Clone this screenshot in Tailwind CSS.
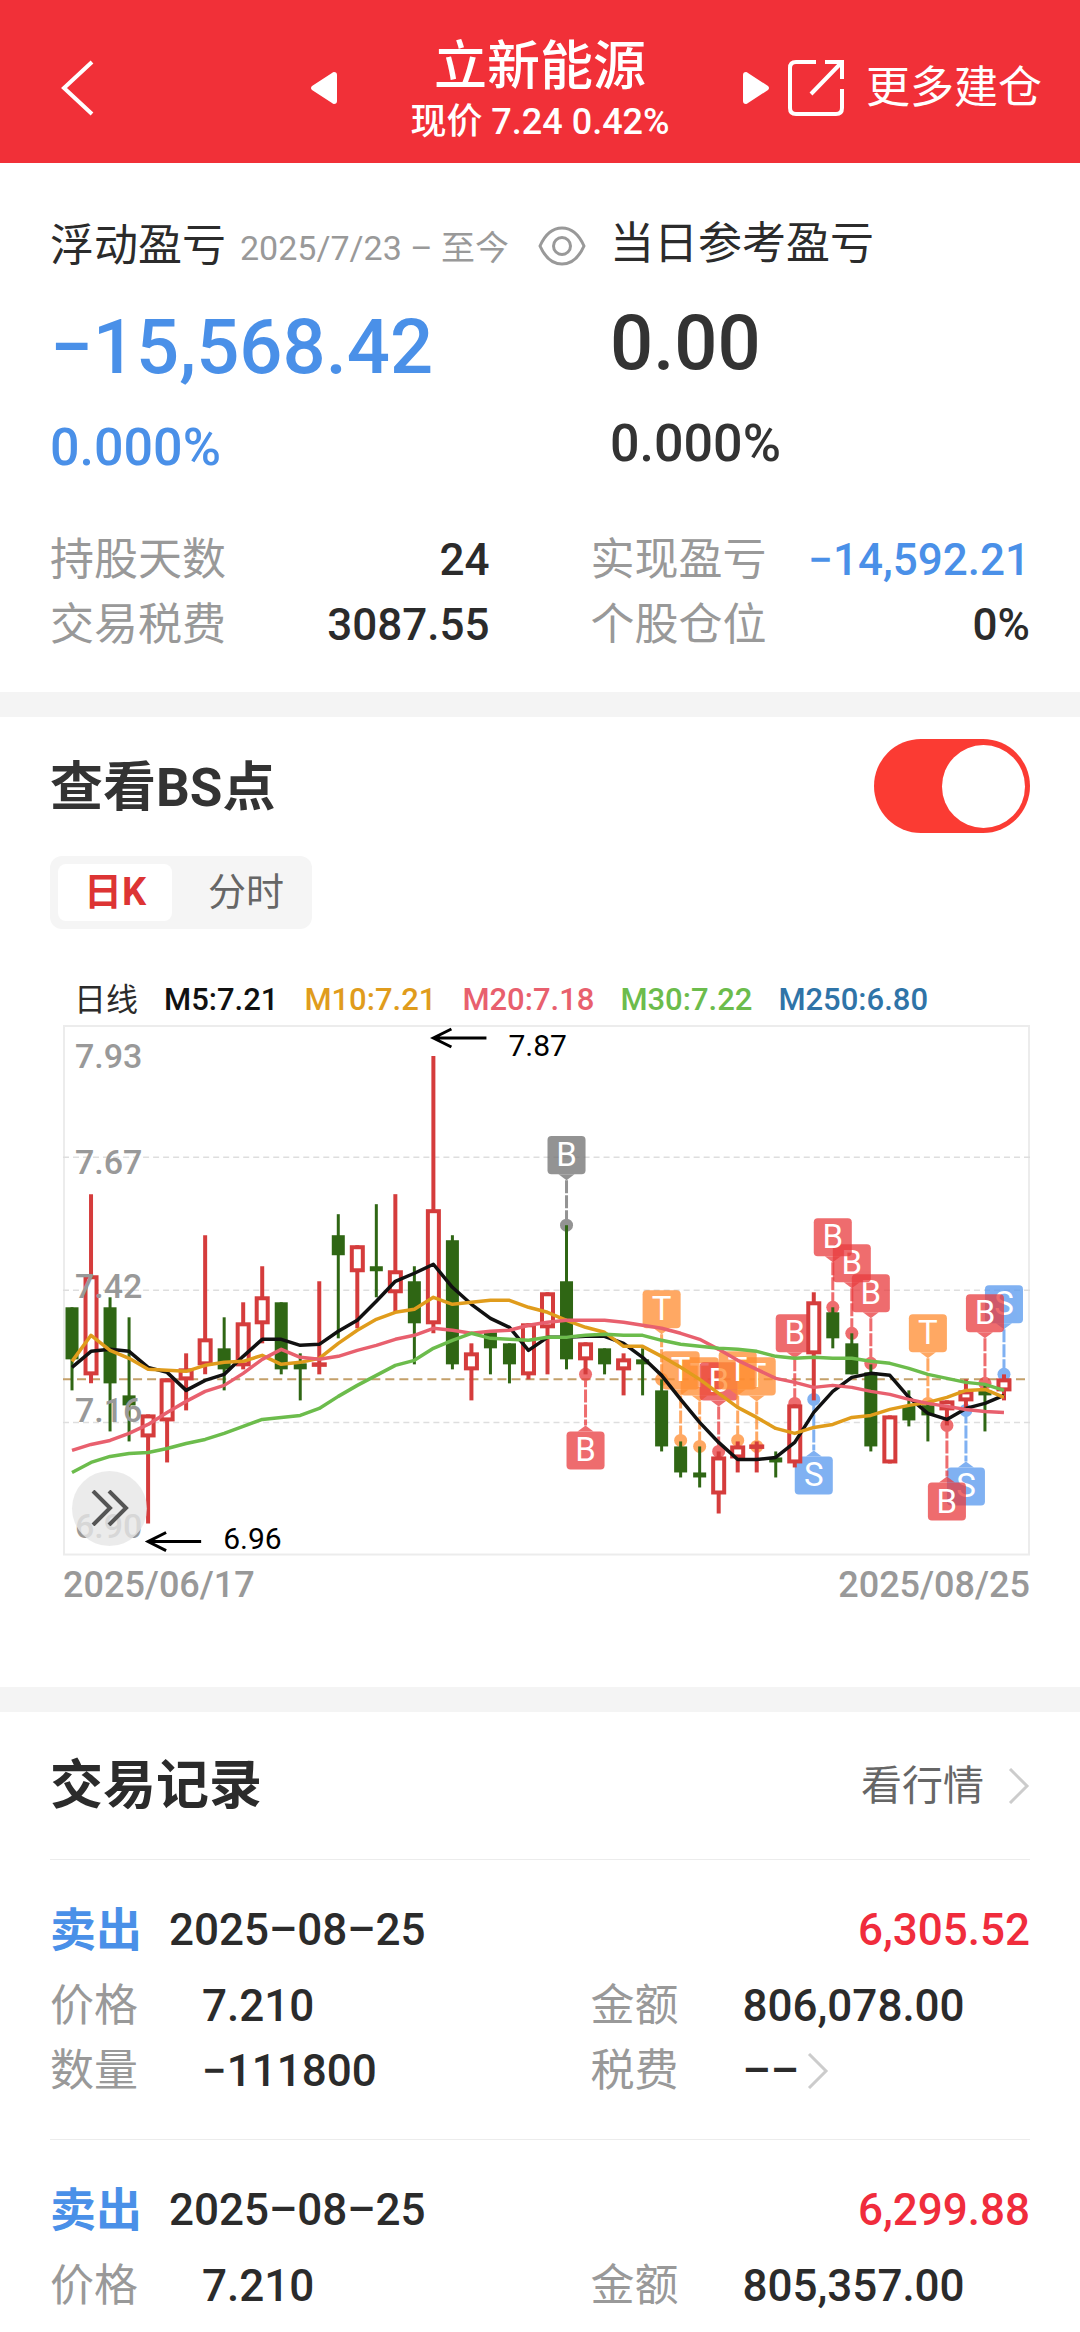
<!DOCTYPE html>
<html lang="zh-CN">
<head>
<meta charset="utf-8">
<meta name="viewport" content="width=device-width, initial-scale=1">
<title>立新能源</title>
<script src="https://cdn.jsdelivr.net/npm/@tailwindcss/browser@4"></script>
</head>
<body class="bg-white font-[Roboto,'Noto_Sans_CJK_SC',sans-serif] text-[#2b2b2b]">

<header class="flex items-center bg-[#f13038] pt-3 h-[163px] text-white">
  <div class="flex flex-1 items-center">
    <button type="button" aria-label="返回" class="ml-[60px]">
      <svg class="block h-[60px] w-9" viewBox="0 0 36 60" fill="none" stroke="currentColor" stroke-width="4"><path d="M32 4 4 30l28 26"/></svg>
    </button>
  </div>
  <div class="flex w-[458px] items-center justify-between">
    <button type="button" aria-label="上一只"><svg class="block h-8 w-[26px]" viewBox="0 0 26 32" fill="currentColor"><path d="M23 0q3 0 3 3v26q0 3-3 3-1 0-2-1L1 18q-2-2 0-4L21 1q1-1 2-1z"/></svg></button>
    <div class="pt-3 text-center">
      <h1 class="text-[53px] leading-[56px] font-medium">立新能源</h1>
      <p class="text-[36px] leading-[54px] font-medium">现价 7.24 0.42%</p>
    </div>
    <button type="button" aria-label="下一只"><svg class="block h-8 w-[26px]" viewBox="0 0 26 32" fill="currentColor"><path d="M3 0Q0 0 0 3v26q0 3 3 3 1 0 2-1l20-13q2-2 0-4L5 1Q4 0 3 0z"/></svg></button>
  </div>
  <div class="flex flex-1 items-center justify-end">
    <a href="#" class="mr-[38px] flex items-center gap-[22px] whitespace-nowrap text-[44px] leading-[60px]">
      <svg class="block size-14 shrink-0" viewBox="0 0 56 56" fill="none" stroke="currentColor" stroke-width="4"><path d="M28 2H8Q2 2 2 8v40q0 6 6 6h40q6 0 6-6V29M37 2h17v17M54 2 23 34"/></svg>
      更多建仓
    </a>
  </div>
</header>

<main>
  <section class="px-[50px] pt-[51px] pb-[34px]">
    <div class="grid grid-cols-[4fr_3fr]">
      <div class="text-[#4a90e8]">
        <h2 class="flex items-center text-[44px] leading-[60px] whitespace-nowrap text-[#2b2b2b]">浮动盈亏
          <span class="ml-[14px] pt-1 text-[34px] text-[#999]">2025/7/23 – 至今</span>
          <button type="button" aria-label="隐藏金额" class="ml-[29px]"><svg class="block h-10 w-12" viewBox="0 0 48 40" fill="none" stroke="#999" stroke-width="3"><path d="M2 20Q10 2 24 2t22 18Q38 38 24 38T2 20z"/><circle cx="24" cy="20" r="8.500"/></svg></button>
        </h2>
        <p class="mt-6 text-[76px] leading-[90px] font-medium">−15,568.42</p>
        <p class="mt-6 text-[52px] leading-[64px] font-medium">0.000%</p>
      </div>
      <div class="text-[#333]">
        <h2 class="text-[44px] leading-[60px] text-[#2b2b2b]">当日参考盈亏</h2>
        <p class="mt-6 text-[76px] leading-[90px] font-medium">0.00</p>
        <p class="mt-6 text-[52px] leading-[64px] font-medium">0.000%</p>
      </div>
    </div>
    <dl class="mt-[48px] grid grid-cols-2 gap-x-[101px] text-[44px] leading-[65px]">
      <div class="flex justify-between"><dt class="text-[#999]">持股天数</dt><dd class="font-medium">24</dd></div>
      <div class="flex justify-between"><dt class="text-[#999]">实现盈亏</dt><dd class="font-medium text-[#4a90e8]">−14,592.21</dd></div>
      <div class="flex justify-between"><dt class="text-[#999]">交易税费</dt><dd class="font-medium">3087.55</dd></div>
      <div class="flex justify-between"><dt class="text-[#999]">个股仓位</dt><dd class="font-medium">0%</dd></div>
    </dl>
  </section>

  <div class="h-[25px] bg-[#f4f4f4]"></div>

  <section class="px-[50px] pt-[22px] pb-[77px]">
    <div class="flex items-center justify-between">
      <label for="bs" class="pt-1 text-[53px] leading-[60px] font-bold text-[#333]">查看BS点</label>
      <input id="bs" type="checkbox" role="switch" checked class="flex h-[94px] w-[156px] appearance-none items-center justify-end rounded-full bg-[#fb3b33] px-[5px] before:size-[83px] before:rounded-full before:bg-white before:content-['']">
    </div>
    <div class="mt-[23px] flex w-fit rounded-xl bg-[#f5f5f5] p-2 text-[38px] leading-[57px]">
      <button type="button" class="w-[114px] rounded-lg bg-white font-bold text-[#dd3434]">日K</button>
      <button type="button" class="w-[132px] pl-4 text-[#666]">分时</button>
    </div>
    <p class="mt-12 flex gap-[26px] pl-6 text-[31px] leading-[46px] font-medium whitespace-nowrap">
      <span class="text-[32px] font-normal">日线</span><span class="text-[#111]">M5:7.21</span><span class="text-[#e09c1c]">M10:7.21</span><span class="text-[#e8606e]">M20:7.18</span><span class="text-[#6cbc4c]">M30:7.22</span><span class="text-[#2f74a8]">M250:6.80</span>
    </p>
    <div class="relative mt-[2px] ml-[13px]">
      <svg id="chart" class="block w-full overflow-visible" viewBox="0 0 966 530" font-family="Roboto, sans-serif" role="img" aria-label="日K线图"></svg>
      <button type="button" aria-label="展开" class="absolute bottom-[10px] left-[9px] flex size-[75px] items-center justify-center rounded-full bg-[#e6e6e6]/80">
        <svg class="block h-9 w-[38px]" viewBox="0 0 38 36" fill="none" stroke="#555" stroke-width="4"><path d="m2 1 17 17L2 35M18 1l17 17-17 17"/></svg>
      </button>
    </div>
    <p class="mt-1 ml-[13px] flex justify-between text-[36px] leading-[50px] font-medium text-[#999]"><time>2025/06/17</time><time>2025/08/25</time></p>
  </section>

  <div class="h-[25px] bg-[#f4f4f4]"></div>

  <section class="px-[50px]">
    <div class="flex items-center justify-between border-b border-[#ececec] pt-11 pb-[43px]">
      <h2 class="text-[53px] leading-[60px] font-bold">交易记录</h2>
      <a href="#" class="flex items-center gap-6 text-[41px] leading-[60px] text-[#666]">看行情
        <svg class="block h-9 w-[22px]" viewBox="0 0 22 36" fill="none" stroke="#ccc" stroke-width="3"><path d="m2 1 17 17L2 35"/></svg>
      </a>
    </div>

    <article class="border-b border-[#ececec] pt-10 pb-[35px]">
      <h3 class="flex items-center text-[44px] leading-[60px] font-medium"><span class="w-[119px] text-[46px] font-bold text-[#4a90e8]">卖出</span><time>2025–08–25</time><span class="ml-auto text-[#f02c3c]">6,305.52</span></h3>
      <dl class="mt-[14px] grid grid-cols-2 gap-x-[101px] text-[44px] leading-[65px]">
        <div class="grid grid-cols-[152px_1fr]"><dt class="text-[#999]">价格</dt><dd class="font-medium">7.210</dd></div>
        <div class="grid grid-cols-[152px_1fr]"><dt class="text-[#999]">金额</dt><dd class="font-medium">806,078.00</dd></div>
        <div class="grid grid-cols-[152px_1fr]"><dt class="text-[#999]">数量</dt><dd class="font-medium">−111800</dd></div>
        <div class="grid grid-cols-[152px_1fr]"><dt class="text-[#999]">税费</dt><dd class="flex items-center gap-2 font-medium">––
          <svg class="block h-9 w-[22px]" viewBox="0 0 22 36" fill="none" stroke="#ccc" stroke-width="3"><path d="m2 1 17 17L2 35"/></svg></dd></div>
      </dl>
    </article>

    <article class="pt-10 pb-3">
      <h3 class="flex items-center text-[44px] leading-[60px] font-medium"><span class="w-[119px] text-[46px] font-bold text-[#4a90e8]">卖出</span><time>2025–08–25</time><span class="ml-auto text-[#f02c3c]">6,299.88</span></h3>
      <dl class="mt-[14px] grid grid-cols-2 gap-x-[101px] text-[44px] leading-[65px]">
        <div class="grid grid-cols-[152px_1fr]"><dt class="text-[#999]">价格</dt><dd class="font-medium">7.210</dd></div>
        <div class="grid grid-cols-[152px_1fr]"><dt class="text-[#999]">金额</dt><dd class="font-medium">805,357.00</dd></div>
      </dl>
    </article>
  </section>
</main>

<script>
// Candles: direction, body top, body bottom, high, low (chart units, y down)
const candles = [
  ['d',282,334,282,365],['u',250,350,169,358],['d',282,358,272,406],['d',370,380,292,416],['u',389,412,389,498],
  ['u',353,396,353,437],['u',343,355,328,385],['u',313,340,210,349],['d',323,344,292,365],['u',297,341,277,344],
  ['u',271,299,241,318],['d',277,344,277,349],['d',338,344,328,375],['u',337,341,256,349],['d',210,230,189,313],
  ['u',220,247,220,303],['d',241,246,179,272],['u',245,268,169,287],['d',256,298,241,339],['u',184,299,31,308],
  ['d',215,339,210,344],['u',327,345,318,375],['d',307,323,307,349],['d',318,339,318,358],['u',298,350,298,354],
  ['u',267,303,267,349],['d',256,334,200,344],['u',317,335,317,349],['d',323,339,323,349],['u',333,345,328,370],
  ['d',334,339,323,370],['d',365,421,354,426],['d',421,447,416,452],['d',447,452,421,462],['u',431,469,426,488],
  ['u',420,433,416,447],['u',419,423,416,447],['d',432,437,426,452],['u',379,438,379,442],['u',276,329,267,375],
  ['d',287,313,282,323],['d',318,349,308,349],['d',347,421,339,426],['u',390,438,390,438],['d',380,395,365,401],
  ['d',380,390,378,416],['u',375,385,375,400],['u',365,376,354,385],['d',365,370,358,406],['u',353,366,349,375]
];
const averages = {
  '#111111': [342,326,324,326,342,347,365,355,349,331,314,314,320,319,306,295,276,256,248,239,262,279,293,302,325,312,312,311,311,318,332,350,374,397,417,434,434,432,417,387,366,352,348,350,372,388,394,383,378,370],
  '#e09c1c': [336,310,325,333,344,345,346,340,337,336,330,339,337,333,318,305,294,287,284,272,279,277,275,275,282,287,295,302,307,321,321,331,342,354,368,382,392,403,408,402,399,392,390,384,380,377,372,365,364,372],
  '#e8606e': [425,419,415,408,399,387,376,366,360,348,334,324,332,334,331,325,320,314,310,303,305,308,306,305,300,297,295,295,295,297,300,303,308,314,324,335,344,353,357,362,360,362,366,369,374,378,381,384,386,387],
  '#6cbc4c': [447,437,431,428,427,423,418,414,408,401,394,392,390,383,371,360,350,340,335,323,315,308,313,314,315,312,312,310,309,310,310,315,319,321,323,324,326,331,333,332,333,333,336,338,343,349,353,357,359,365]
};
// Trade markers: candle index, letter, colour, dot y, side (-1 above, 1 below)
const R = '#e93c3e', O = '#ff8c30', B = '#5698ee', G = '#707070';
const markers = [
  [49,'S',B,349,-1],[48,'B',R,358,-1],[47,'S',B,385,1],[46,'B',R,400,1],[45,'T',O,378,-1],[42,'B',R,338,-1],
  [41,'B',R,308,-1],[40,'B',R,282,-1],[39,'S',B,374,1],[38,'B',R,378,-1],[36,'T',O,421,-1],[33,'T',O,421,-1],
  [34,'B',R,426,-1],[35,'T',O,415,-1],[32,'T',O,415,-1],[31,'T',O,354,-1],[27,'B',R,349,1],[26,'B',G,200,-1]
];
const X = i => 9 + 19 * i;
let s = '<rect x="1" y="1" width="964" height="528" fill="none" stroke="#ececec" stroke-width="2"/>';
for (const y of [132, 265, 397]) s += `<path d="M0 ${y}H966" stroke="#dedede" stroke-width="1.500" stroke-dasharray="6 4"/>`;
s += '<path d="M0 354H966" stroke="#c4a06a" stroke-width="2" stroke-dasharray="9 5"/>';
for (const [i, t, c, y, side] of markers) {
  const x = X(i), top = side < 0 ? y - 89 : y + 57;
  const tip = side < 0 ? `M${x-8} ${top+38}h16l-8 6z` : `M${x-8} ${top}h16l-8-6z`;
  const stem = side < 0 ? `M${x} ${top+44}V${y}` : `M${x} ${y}V${top-6}`;
  s += `<g opacity=".75" fill="${c}"><path d="${stem}" stroke="${c}" stroke-width="3" stroke-dasharray="13 2"/><circle cx="${x}" cy="${y}" r="6.500"/><rect x="${x-19}" y="${top}" width="38" height="38" rx="4"/><path d="${tip}"/></g>`;
  s += `<text x="${x}" y="${top+30}" font-size="33" text-anchor="middle" fill="#fff">${t}</text>`;
}
candles.forEach(([d, a, b, h, l], i) => {
  const x = X(i);
  if (d === 'd') s += `<path d="M${x} ${h}V${l}" stroke="#2f6614" stroke-width="3"/><rect x="${x-6.5}" y="${a}" width="13" height="${b-a}" fill="#2f6614"/>`;
  else s += `<path d="M${x} ${h}V${l}" stroke="#d53c3c" stroke-width="4"/><rect x="${x-5.5}" y="${a+2}" width="11" height="${Math.max(b-a-4,0.5)}" fill="#fff" stroke="#d53c3c" stroke-width="4"/>`;
});
for (const [c, ys] of Object.entries(averages))
  s += `<polyline points="${ys.map((y, i) => X(i) + ',' + y).join(' ')}" fill="none" stroke="${c}" stroke-width="3.5" stroke-linejoin="round"/>`;
for (const [t, y] of [['7.93',43],['7.67',149],['7.42',273],['7.16',397],['6.90',512]])
  s += `<text x="12" y="${y}" font-size="34" font-weight="500" fill="#999">${t}</text>`;
s += '<path d="M423 13H370M388 4l-18 9 18 9M138 516H85M103 507l-18 9 18 9" fill="none" stroke="#000" stroke-width="3"/>';
s += '<text x="445" y="31" font-size="30" fill="#000">7.87</text><text x="160" y="523" font-size="30" fill="#000">6.96</text>';
document.getElementById('chart').innerHTML = s;
</script>
</body>
</html>
